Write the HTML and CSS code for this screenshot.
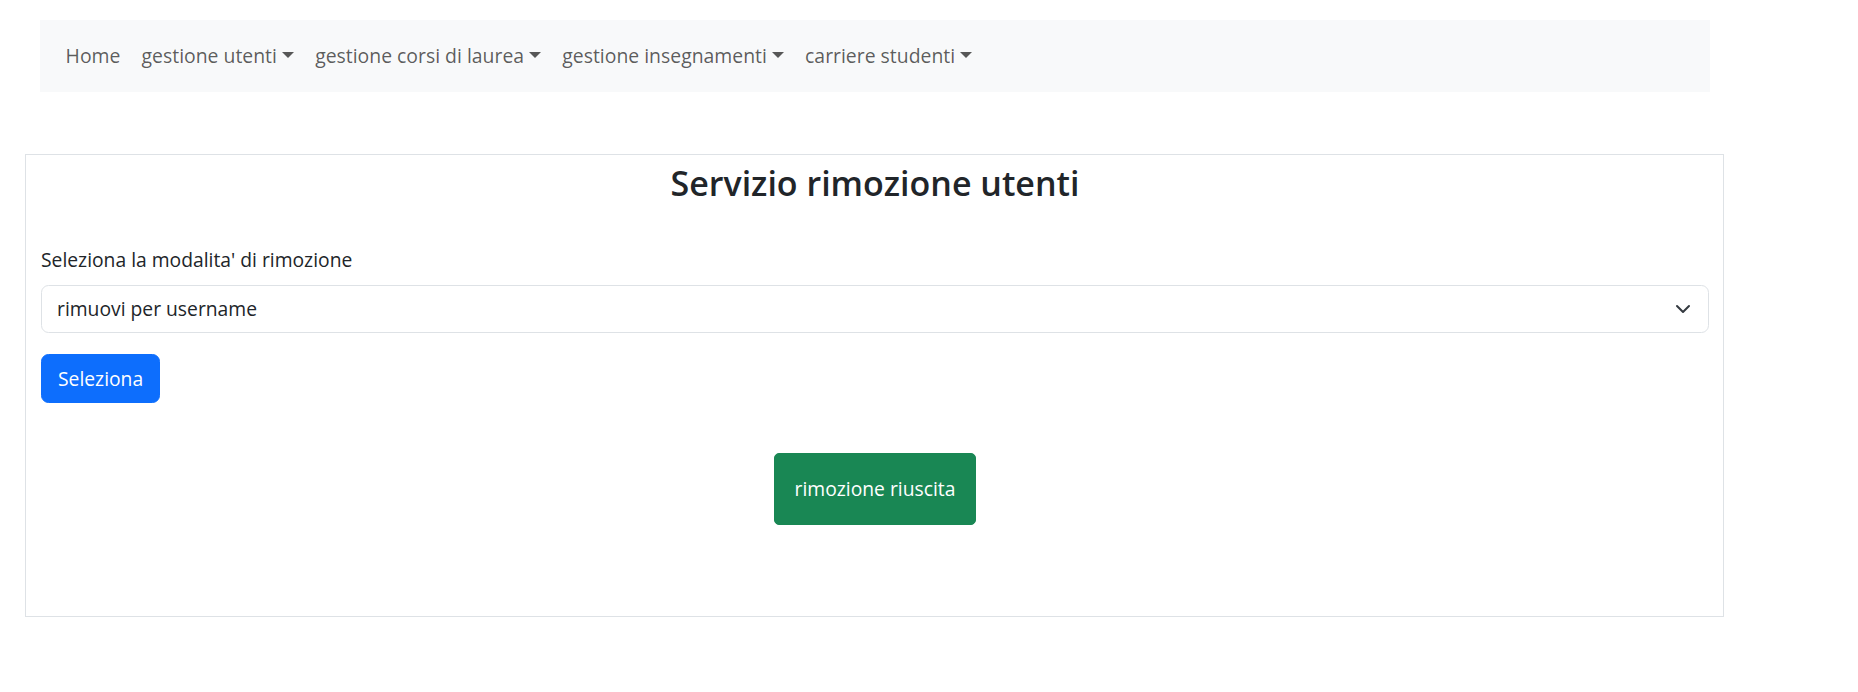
FILE: index.html
```html
<!DOCTYPE html>
<html lang="it">
<head>
<meta charset="utf-8">
<title>Servizio rimozione utenti</title>
<link rel="stylesheet" href="styles.css">
</head>
<body>
<nav class="navbar">
  <ul class="nav-list">
    <li><a class="nav-link" href="#">Home</a></li>
    <li><a class="nav-link dropdown" href="#">gestione utenti</a></li>
    <li><a class="nav-link dropdown" href="#">gestione corsi di laurea</a></li>
    <li><a class="nav-link dropdown" href="#">gestione insegnamenti</a></li>
    <li><a class="nav-link dropdown" href="#">carriere studenti</a></li>
  </ul>
</nav>

<main class="card">
  <h2 class="card-title">Servizio rimozione utenti</h2>
  <form class="form">
    <label class="form-label" for="modalita">Seleziona la modalita' di rimozione</label>
    <div class="select-wrap">
      <select class="form-select" id="modalita">
        <option>rimuovi per username</option>
      </select>
      <svg class="select-chevron" width="16" height="16" viewBox="0 0 16 16" aria-hidden="true"><path d="m2 5 6 6 6-6" fill="none" stroke="#343a40" stroke-width="2" stroke-linecap="round" stroke-linejoin="round"/></svg>
    </div>
    <button type="button" class="btn-primary">Seleziona</button>
  </form>
  <div class="result">
    <div class="result-box">rimozione riuscita</div>
  </div>
</main>
</body>
</html>
```
FILE: styles.css
```css
* { box-sizing: border-box; }

body {
  margin: 0;
  font-family: "Open Sans", "Noto Sans", sans-serif;
  font-size: 19.3px;
  line-height: 30px;
  color: #212529;
  background: #fff;
}

.navbar {
  margin: 20px 0 0 40px;
  width: 1670px;
  height: 72px;
  background: #f8f9fa;
  padding: 11px 15px;
  display: flex;
  align-items: center;
}

.nav-list {
  list-style: none;
  margin: 0;
  padding: 0;
  display: flex;
}

.nav-link {
  display: block;
  padding: 10px 10.6px;
  font-size: 19.4px;
  color: rgba(0, 0, 0, 0.65);
  text-decoration: none;
}

.dropdown::after {
  content: "";
  display: inline-block;
  margin-left: 5px;
  vertical-align: 5px;
  border-top: 6px solid;
  border-left: 6px solid transparent;
  border-right: 6px solid transparent;
  border-bottom: 0;
}

.card {
  display: block;
  margin: 62px 0 0 25px;
  width: 1699px;
  border: 1px solid #dee2e6;
  padding: 0 14px 91px 15px;
}

.card-title {
  margin: 7px 0 41px;
  font-size: 34px;
  font-weight: 600;
  line-height: 42px;
  text-align: center;
  color: #212529;
}

.form {
  display: flex;
  flex-direction: column;
  align-items: flex-start;
}

.form-label {
  display: block;
  margin-bottom: 10px;
}

.select-wrap {
  position: relative;
  width: 100%;
}

.form-select {
  display: block;
  width: 100%;
  height: 48px;
  margin: 0;
  padding: 0 50px 0 15px;
  font: inherit;
  line-height: 30px;
  color: #212529;
  background: #fff;
  border: 1px solid #dee2e6;
  border-radius: 7.5px;
  appearance: none;
  -webkit-appearance: none;
  outline: none;
}

.select-chevron {
  position: absolute;
  right: 18px;
  top: 16px;
  pointer-events: none;
}

.btn-primary {
  margin-top: 21px;
  height: 49px;
  padding: 0 16px;
  font: inherit;
  line-height: 30px;
  color: #fff;
  background: #0d6efd;
  border: 1px solid #0d6efd;
  border-radius: 7.5px;
}

.result {
  display: flex;
  justify-content: center;
  margin-top: 50px;
}

.result-box {
  padding: 20px 20px;
  color: #fff;
  background: #198754;
  border: 1px solid #198754;
  border-radius: 5px;
}
```
